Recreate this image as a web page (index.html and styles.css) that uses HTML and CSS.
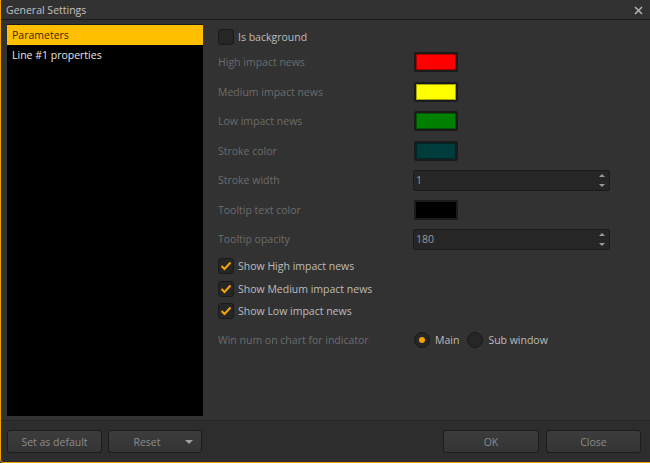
FILE: index.html
```html
<!DOCTYPE html>
<html>
<head>
<meta charset="utf-8">
<link rel="stylesheet" href="styles.css">
</head>
<body>
<div class="window">
  <div class="titlebar">
    <span class="title">General Settings</span>
    <svg class="close" width="9" height="9" viewBox="0 0 9 9"><path d="M1 1 L8 8 M8 1 L1 8" stroke="#b0b0b0" stroke-width="1.6"/></svg>
  </div>
  <div class="main">
    <div class="sidebar">
      <div class="item selected">Parameters</div>
      <div class="item">Line #1 properties</div>
    </div>
    <div class="content">
      <div class="row check-top">
        <span class="cbox"></span><span class="clabel">Is background</span>
      </div>
      <div class="row field">
        <span class="label">High impact news</span>
        <span class="swatch"><span class="fill red"></span></span>
      </div>
      <div class="row field">
        <span class="label">Medium impact news</span>
        <span class="swatch"><span class="fill yellow"></span></span>
      </div>
      <div class="row field">
        <span class="label">Low impact news</span>
        <span class="swatch"><span class="fill green"></span></span>
      </div>
      <div class="row field">
        <span class="label">Stroke color</span>
        <span class="swatch"><span class="fill teal"></span></span>
      </div>
      <div class="row field">
        <span class="label">Stroke width</span>
        <span class="spin"><span class="val">1</span><span class="arrows"><span class="up"></span><span class="down"></span></span></span>
      </div>
      <div class="row field">
        <span class="label">Tooltip text color</span>
        <span class="swatch"><span class="fill black"></span></span>
      </div>
      <div class="row field">
        <span class="label">Tooltip opacity</span>
        <span class="spin"><span class="val">180</span><span class="arrows"><span class="up"></span><span class="down"></span></span></span>
      </div>
      <div class="checks">
        <div class="row check">
          <span class="cbox on"><svg width="12" height="10" viewBox="0 0 12 10"><path d="M1.5 5 L4.5 8 L10.5 1.5" fill="none" stroke="#f5a400" stroke-width="2"/></svg></span><span class="clabel">Show High impact news</span>
        </div>
        <div class="row check">
          <span class="cbox on"><svg width="12" height="10" viewBox="0 0 12 10"><path d="M1.5 5 L4.5 8 L10.5 1.5" fill="none" stroke="#f5a400" stroke-width="2"/></svg></span><span class="clabel">Show Medium impact news</span>
        </div>
        <div class="row check">
          <span class="cbox on"><svg width="12" height="10" viewBox="0 0 12 10"><path d="M1.5 5 L4.5 8 L10.5 1.5" fill="none" stroke="#f5a400" stroke-width="2"/></svg></span><span class="clabel">Show Low impact news</span>
        </div>
      </div>
      <div class="row field radio-row">
        <span class="label">Win num on chart for indicator</span>
        <span class="radios">
          <span class="radio on"></span><span class="clabel rl">Main</span>
          <span class="radio"></span><span class="clabel rl">Sub window</span>
        </span>
      </div>
    </div>
  </div>
  <div class="footer">
    <div class="left-btns">
      <button class="btn w95">Set as default</button>
      <button class="btn w94 reset">Reset <span class="caret"></span></button>
    </div>
    <div class="right-btns">
      <button class="btn w96">OK</button>
      <button class="btn w95">Close</button>
    </div>
  </div>
</div>
</body>
</html>
```
FILE: styles.css
```css
html, body {
  margin: 0;
  padding: 0;
  background: #333333;
}
body {
  font-family: "Open Sans", "Noto Sans", "DejaVu Sans", sans-serif;
  font-size: 10.5px;
}
.window {
  width: 649px;
  height: 462px;
  display: flex;
  flex-direction: column;
  background: #323232;
  border-left: 1px solid #f0a000;
  border-bottom: 1px solid #f0a000;
  border-bottom-left-radius: 4px;
  overflow: hidden;
}
.titlebar {
  height: 19px;
  flex: none;
  display: flex;
  align-items: center;
  justify-content: space-between;
  padding: 0 7px 0 5px;
  background: #313131;
  border-bottom: 1px solid #1b1b1b;
}
.title {
  color: #c2c2c2;
  font-size: 10.5px;
}
.close {
  margin-top: 1px;
}
.main {
  flex: none;
  height: 392px;
  display: flex;
  padding: 4px 0 4px 6px;
}
.sidebar {
  width: 196px;
  background: #000;
  display: flex;
  flex-direction: column;
  border-top: 1px solid #1a1a1a;
}
.item {
  height: 20px;
  line-height: 20px;
  padding-left: 5px;
  color: #e6e6e6;
}
.item.selected {
  background: #ffbe00;
  color: #3a2a00;
}
.content {
  flex: 1;
  display: flex;
  flex-direction: column;
  padding: 3.5px 0 0 15px;
}
.row {
  display: flex;
  align-items: center;
}
.check-top {
  height: 18px;
  margin-bottom: 2px;
}
.field {
  height: 29.5px;
  justify-content: space-between;
  padding-right: 40px;
}
.label {
  color: #6c6c6c;
}
.clabel {
  color: #bdbdbd;
}
.cbox {
  width: 14px;
  height: 14px;
  border: 1px solid #1a1a1a;
  border-radius: 3px;
  background: #262626;
  margin-right: 4px;
  display: flex;
  align-items: center;
  justify-content: center;
}
.checks {
  display: flex;
  flex-direction: column;
  padding-top: 1px;
}
.check {
  height: 22.5px;
}
.swatch {
  width: 40px;
  height: 16px;
  border: 2px solid #1b1b1b;
  border-radius: 2px;
  margin-right: 152px;
  display: flex;
}
.fill {
  flex: 1;
  border: 1px solid rgba(0,0,0,0.35);
}
.red { background: #ff0000; }
.yellow { background: #ffff00; }
.green { background: #008000; }
.teal { background: #003c3c; }
.black { background: #000000; }
.spin {
  width: 193px;
  height: 19px;
  background: #262626;
  border: 1px solid #1b1b1b;
  border-radius: 2px;
  display: flex;
  align-items: center;
  justify-content: space-between;
  padding: 0 0 0 2px;
}
.val {
  color: #9a9a9a;
}
.arrows {
  display: flex;
  flex-direction: column;
  justify-content: space-between;
  height: 13px;
  width: 14px;
  align-items: center;
}
.up, .down {
  width: 0;
  height: 0;
  border-left: 3px solid transparent;
  border-right: 3px solid transparent;
}
.up { border-bottom: 3px solid #9a9a9a; }
.down { border-top: 3px solid #9a9a9a; }
.radio-row {
  margin-top: 3px;
  padding-right: 0;
  justify-content: flex-start;
}
.radio-row .label {
  width: 196px;
}
.radios {
  display: flex;
  align-items: center;
}
.radio {
  width: 14px;
  height: 14px;
  border-radius: 50%;
  background: #262626;
  border: 1px solid #1a1a1a;
  display: flex;
  align-items: center;
  justify-content: center;
  margin-right: 5px;
}
.radio.on::after {
  content: "";
  width: 6px;
  height: 6px;
  border-radius: 50%;
  background: #f5a400;
}
.rl {
  margin-right: 8px;
}
.footer {
  flex: 1;
  display: flex;
  justify-content: space-between;
  align-items: flex-start;
  padding: 9px 9px 0 6px;
  border-top: 1px solid #262626;
  background: #2d2d2d;
}
.left-btns, .right-btns {
  display: flex;
  gap: 6px;
}
.right-btns { gap: 7px; }
.btn {
  height: 23px;
  font-family: inherit;
  font-size: 10.5px;
  color: #8c8c8c;
  background: linear-gradient(#3c3c3c, #343434);
  border: 1px solid #1c1c1c;
  border-radius: 3px;
  padding: 0;
  position: relative;
}
.w95 { width: 95px; }
.w94 { width: 94px; }
.w96 { width: 96px; }
.reset {
  padding-right: 16px;
}
.caret {
  position: absolute;
  right: 8px;
  top: 9px;
  width: 0;
  height: 0;
  border-left: 4px solid transparent;
  border-right: 4px solid transparent;
  border-top: 4px solid #a0a0a0;
}
```
